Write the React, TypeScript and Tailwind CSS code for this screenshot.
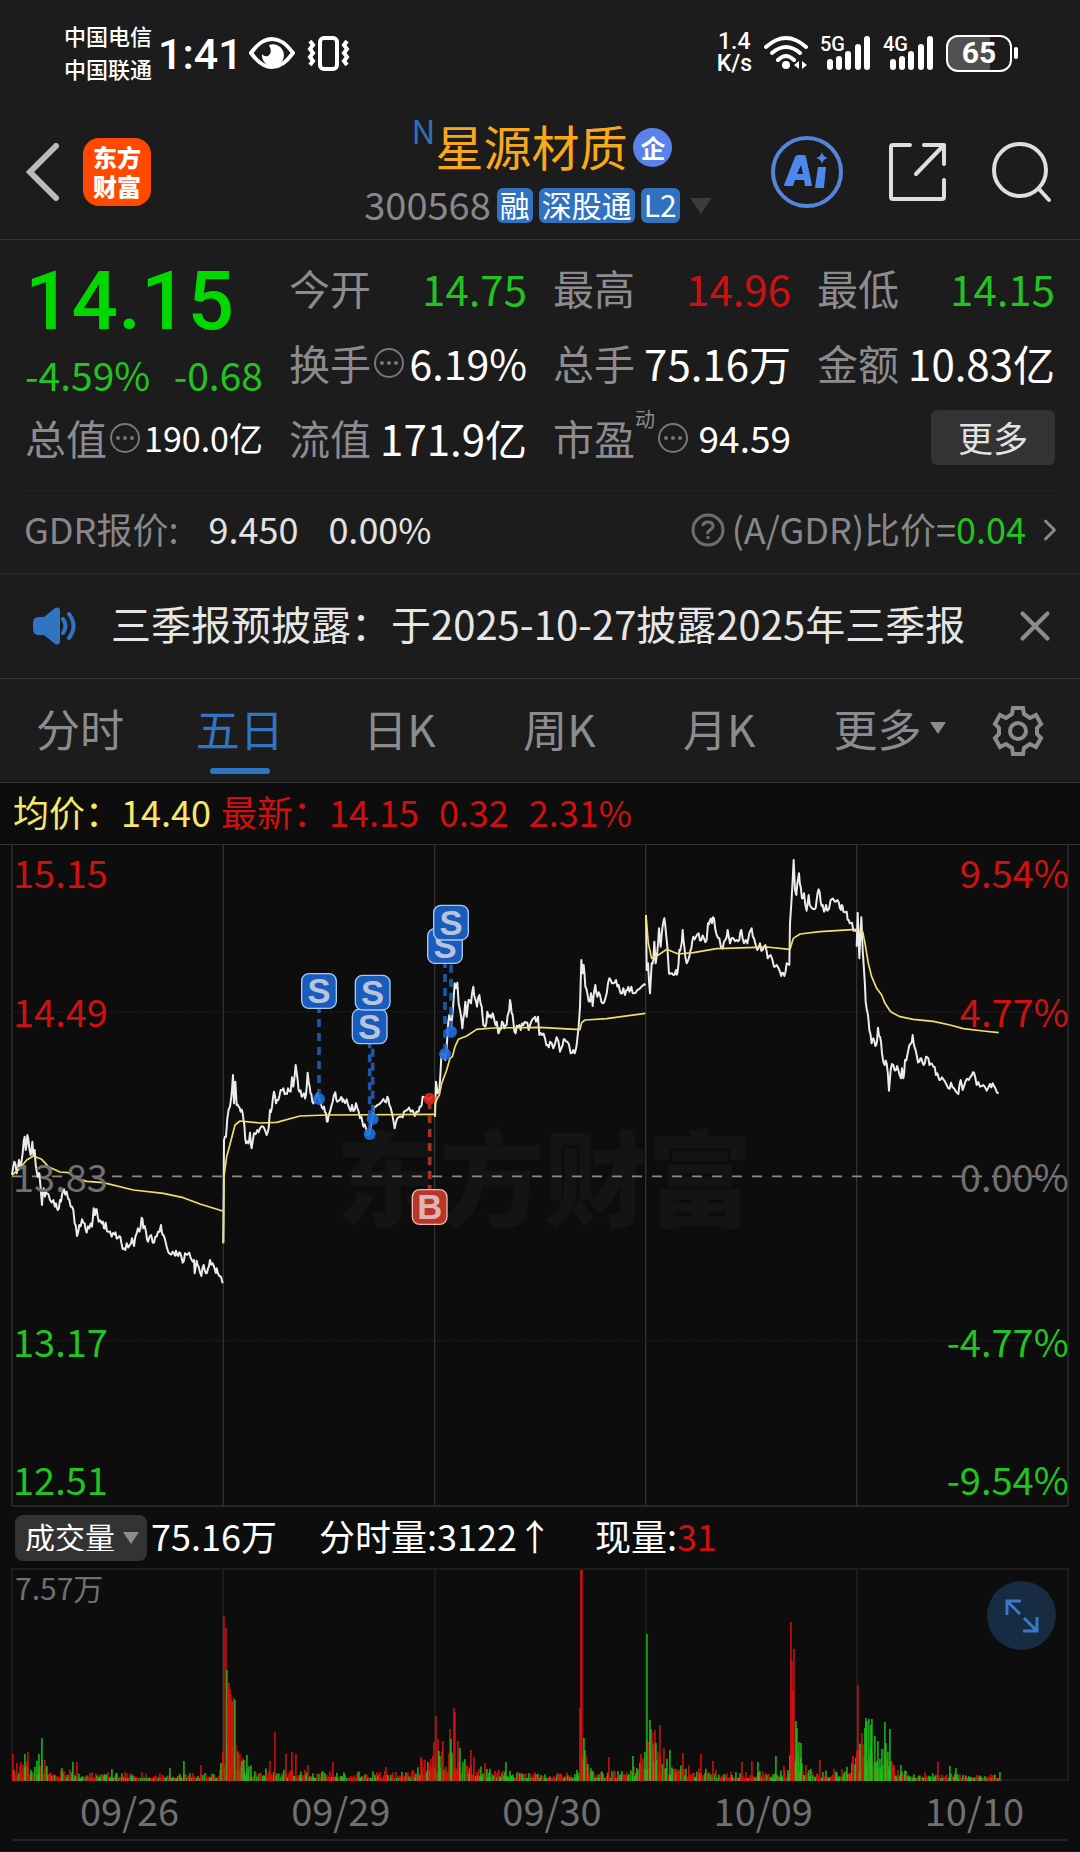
import { ChevronRight, X } from "lucide-react";

const RED = "#d01010";
const GREEN = "#22c322";

// Chart coordinates are thirds of a pixel; each trading day is 634 units wide.
const DAYS = [
  {
    price:
      "36,1005 43,965 50,1000 57,960 63,975 68,940 74,890 77,930 82,885 88,925 92,945 97,905 100,945 104,930 107,975 113,1010 118,1000 122,1045 126,1095 131,1045 135,1070 140,1060 150,1080 160,1080 165,1100 168,1090 173,1110 180,1080 186,1065 192,1048 200,1055 208,1080 212,1100 220,1110 224,1150 231,1188 238,1155 246,1138 254,1150 260,1178 268,1165 276,1160 281,1105 285,1125 290,1108 296,1145 305,1150 312,1165 317,1148 325,1175 335,1190 343,1183 350,1196 358,1188 364,1208 372,1225 380,1210 390,1214 396,1195 402,1218 410,1180 414,1165 418,1175 425,1133 430,1165 438,1175 444,1205 449,1190 453,1185 458,1208 466,1190 474,1175 483,1155 488,1185 494,1195 500,1220 510,1242 518,1235 522,1240 528,1232 535,1248 540,1238 548,1268 555,1240 568,1238 574,1258 582,1260 584,1300 590,1262 596,1280 604,1308 611,1275 618,1300 624,1285 630,1260 638,1270 645,1290 650,1285 658,1308 668,1330",
    average:
      "36,1005 60,985 80,960 100,948 125,958 145,980 180,996 205,998 230,1015 260,1024 310,1028 400,1050 490,1060 550,1073 600,1092 668,1113",
  },
  {
    price:
      "670,1210 672,900 678,890 682,835 690,800 694,770 699,705 702,790 706,725 710,795 716,800 722,815 728,820 733,855 738,910 745,910 750,878 755,925 762,880 772,870 780,865 790,860 800,885 806,865 810,810 816,800 822,755 828,790 835,780 842,750 850,745 858,760 864,745 872,755 876,712 880,740 887,675 893,720 898,755 905,770 912,760 918,765 923,698 929,740 934,762 940,790 948,770 957,775 965,800 972,800 978,820 983,845 990,815 998,785 1006,757 1012,785 1020,780 1025,772 1030,778 1040,778 1048,805 1056,795 1064,810 1068,790 1076,815 1084,830 1090,860 1098,865 1108,882 1115,840 1122,800 1132,795 1145,785 1155,785 1162,770 1168,795 1176,820 1184,865 1192,835 1204,830 1212,815 1222,810 1232,815 1244,828 1256,815 1262,800 1268,770 1280,775 1296,768",
    average:
      "670,1210 672,1010 680,950 692,905 705,855 720,843 780,849 830,847 900,828 980,825 1302,823",
  },
  {
    price:
      "1305,830 1308,725 1313,760 1318,750 1324,650 1330,645 1336,660 1342,590 1348,525 1354,560 1360,490 1364,430 1368,445 1372,428 1376,490 1380,510 1387,565 1393,520 1396,485 1400,530 1406,480 1413,490 1420,440 1425,475 1431,500 1438,465 1445,500 1450,555 1456,560 1462,515 1470,525 1478,520 1484,545 1490,545 1495,580 1500,565 1506,545 1513,565 1520,555 1525,520 1530,480 1535,520 1540,545 1547,580 1554,560 1562,570 1570,555 1578,548 1586,570 1594,545 1602,535 1608,545 1614,530 1618,585 1626,585 1635,595 1643,615 1650,605 1660,625 1670,592 1680,635 1688,615 1694,598 1702,605 1712,640 1720,630 1724,640 1730,615 1736,560 1740,500 1744,360 1748,400 1751,375 1756,440 1762,460 1770,485 1773,460 1778,498 1786,435 1792,470 1800,465 1808,490 1816,475 1824,430 1832,420 1840,430 1848,420 1856,435 1862,460 1870,445 1875,465 1882,450 1888,455 1894,440 1902,460 1912,450 1920,445 1930,435 1936,436",
    average:
      "1305,830 1306,790 1312,775 1318,765 1325,730 1340,690 1350,655 1357,650 1365,620 1375,598 1400,588 1430,568 1480,564 1620,562 1740,569 1745,548 1755,540 1820,536 1936,520",
  },
  {
    price:
      "1938,225 1940,390 1944,370 1950,460 1955,370 1960,360 1963,305 1967,370 1972,335 1977,265 1982,320 1987,265 1993,235 1998,280 2002,320 2007,400 2013,400 2020,405 2028,390 2033,395 2038,330 2043,320 2048,270 2053,320 2060,370 2068,350 2074,325 2080,290 2088,290 2096,280 2104,300 2112,295 2120,300 2124,250 2130,240 2136,250 2142,235 2150,285 2158,295 2168,325 2176,300 2183,270 2190,310 2200,295 2210,300 2218,300 2224,270 2232,310 2242,310 2255,265 2262,295 2272,330 2280,310 2288,330 2296,315 2303,355 2312,345 2322,380 2330,375 2340,395 2347,398 2353,408 2360,370 2368,375 2370,250 2374,190 2381,60 2385,150 2389,165 2392,130 2397,100 2402,140 2406,175 2412,160 2420,212 2426,165 2432,200 2444,208 2450,180 2456,148 2462,185 2468,195 2472,215 2478,195 2482,212 2492,180 2505,185 2512,180 2520,205 2525,195 2530,215 2540,215 2546,240 2552,250 2560,272 2568,275",
    average:
      "1938,225 1945,310 1955,355 1975,345 2000,328 2035,342 2080,338 2150,326 2300,321 2370,328 2380,295 2400,282 2460,275 2568,268",
  },
  {
    price:
      "2570,320 2573,218 2578,355 2584,232 2588,330 2592,390 2597,485 2603,520 2608,570 2615,610 2620,595 2626,618 2631,605 2634,563 2640,590 2646,640 2654,675 2660,670 2667,752 2672,690 2680,675 2688,690 2695,690 2703,715 2706,685 2710,715 2715,660 2723,640 2733,610 2738,585 2743,620 2750,645 2758,665 2764,655 2771,675 2778,650 2785,655 2792,670 2800,680 2808,705 2812,700 2818,720 2826,712 2835,725 2845,745 2853,728 2862,745 2875,762 2882,720 2888,750 2896,725 2906,720 2916,705 2922,698 2930,735 2940,740 2950,735 2960,752 2970,732 2978,730 2986,745 2996,760",
    average:
      "2570,270 2588,275 2595,310 2605,370 2615,410 2630,445 2645,465 2655,490 2672,515 2700,530 2740,538 2800,544 2850,555 2890,566 2950,573 2996,578",
  },
];

const TRADES = [
  { side: "S", x: 957, y: 777, tagY: 453 },
  { side: "S", x: 1109, y: 882, tagY: 559 },
  { side: "S", x: 1118, y: 837, tagY: 458 },
  { side: "S", x: 1335, y: 642, tagY: 318 },
  { side: "S", x: 1353, y: 575, tagY: 248 },
  { side: "B", x: 1289, y: 776, tagY: 1101 },
];

const AXIS = [
  { price: "15.15", percent: "9.54%", y: 144, color: RED },
  { price: "14.49", percent: "4.77%", y: 561, color: RED },
  { price: "13.83", percent: "0.00%", y: 1055, color: "#707070" },
  { price: "13.17", percent: "-4.77%", y: 1551, color: GREEN },
  { price: "12.51", percent: "-9.54%", y: 1965, color: GREEN },
];

// [x, usual bar height]
const VOLUME_LEVELS = [
  [0, 18], [25, 22], [35, 22], [42, 14], [70, 11], [95, 9], [200, 8], [208, 15], [214, 60], [222, 40],
  [232, 20], [245, 12], [262, 14], [285, 14], [300, 10], [395, 10], [410, 20], [425, 30], [440, 30],
  [455, 22], [475, 14], [500, 10], [560, 9], [566, 20], [570, 30], [580, 13], [610, 11], [628, 22],
  [636, 50], [645, 32], [660, 22], [675, 16], [700, 15], [710, 10], [760, 10], [775, 14], [781, 60],
  [788, 30], [795, 13], [810, 10], [835, 15], [845, 36], [853, 48], [866, 34], [876, 34], [882, 15],
  [900, 9], [988, 7],
];

// [x, height, rising]
const VOLUME_PEAKS = [
  [0, 27, 1], [12, 27, 0], [15, 29, 1], [26, 27, 0], [29, 43, 0], [32, 21, 1], [60, 19, 0], [64, 19, 1],
  [99, 12, 0], [157, 13, 0], [171, 20, 0], [188, 16, 1], [208, 18, 0], [211, 165, 1], [213, 153, 1],
  [214, 111, 0], [215, 98, 1], [216, 98, 1], [217, 92, 1], [218, 87, 1], [219, 80, 1], [220, 80, 1],
  [221, 83, 1], [222, 81, 0], [223, 36, 1], [225, 30, 1], [227, 27, 1], [229, 20, 0], [231, 21, 0],
  [234, 26, 0], [257, 20, 1], [262, 49, 1], [273, 27, 1], [279, 29, 1], [283, 27, 1], [295, 16, 1],
  [320, 19, 1], [373, 14, 1], [408, 24, 1], [409, 22, 1], [416, 18, 1], [420, 25, 1], [421, 39, 1],
  [423, 65, 1], [425, 42, 1], [426, 30, 0], [430, 40, 1], [437, 52, 1], [438, 42, 0], [441, 73, 1],
  [442, 69, 1], [445, 40, 1], [447, 33, 0], [458, 31, 1], [461, 24, 1], [472, 18, 1], [493, 19, 0],
  [567, 73, 1], [568, 211, 1], [569, 211, 1], [571, 43, 0], [572, 31, 0], [573, 25, 1], [596, 24, 1],
  [620, 25, 0], [628, 27, 1], [634, 147, 0], [637, 61, 0], [638, 52, 0], [639, 49, 1], [642, 51, 1],
  [643, 38, 0], [647, 56, 1], [651, 33, 1], [657, 31, 0], [670, 28, 1], [688, 27, 1], [700, 20, 1],
  [729, 19, 1], [739, 20, 1], [745, 19, 0], [763, 25, 0], [771, 15, 1], [778, 159, 1], [779, 120, 1],
  [780, 91, 1], [781, 132, 1], [783, 60, 0], [784, 53, 0], [786, 39, 0], [788, 38, 0], [793, 16, 1],
  [807, 21, 1], [840, 25, 1], [845, 96, 1], [847, 37, 0], [849, 48, 1], [852, 53, 0], [853, 63, 0],
  [854, 60, 0], [856, 62, 0], [858, 56, 0], [859, 62, 0], [862, 45, 0], [865, 40, 0], [869, 32, 0],
  [872, 59, 0], [873, 38, 0], [877, 52, 0], [881, 16, 1], [888, 16, 0], [925, 19, 1], [937, 15, 0],
  [943, 13, 0], [987, 9, 0],
];

function noise(n: number) {
  const v = Math.sin(n * 127.1 + 11.7) * 43758.5453;
  return v - Math.floor(v);
}

function withTicks(points: string) {
  const list = points.split(" ").map((p) => p.split(",").map(Number));
  return list
    .flatMap(([x, y], i) => {
      const next = list[i + 1];
      if (!next || next[0] - x < 5) return [`${x},${y}`];
      const tick = (noise(x) - 0.5) * 26;
      return [`${x},${y}`, `${(x + next[0]) / 2},${(y + next[1]) / 2 + tick}`];
    })
    .join(" ");
}

function levelAt(x: number) {
  const i = Math.max(1, VOLUME_LEVELS.findIndex(([px]) => px >= x));
  const [x0, h0] = VOLUME_LEVELS[i - 1];
  const [x1, h1] = VOLUME_LEVELS[i];
  return h0 + ((h1 - h0) * (x - x0)) / (x1 - x0);
}

const VOLUME_BARS = Array.from({ length: 987 }, (_, x) => {
  const swing = noise(x);
  return [x, Math.max(3, levelAt(x) * (0.25 + 0.75 * swing * swing)), noise(x + 2000) > 0.5 ? 1 : 0];
});

function Triangle({ className }: { className: string }) {
  return (
    <svg viewBox="0 0 16 12" className={className} fill="currentColor" aria-hidden="true">
      <path d="M0 0H16L8 12Z" />
    </svg>
  );
}

function Dots() {
  return (
    <svg viewBox="0 0 32 32" className="ml-0.5 size-8 shrink-0 text-[#77777a]" fill="currentColor" aria-hidden="true">
      <circle cx="16" cy="16" r="14" fill="none" stroke="currentColor" strokeWidth="2" />
      <circle cx="9" cy="16" r="2" />
      <circle cx="16" cy="16" r="2" />
      <circle cx="23" cy="16" r="2" />
    </svg>
  );
}

function Signal({ label }: { label: string }) {
  return (
    <div className="relative">
      <span className="absolute -top-px left-0 font-[Roboto] text-[20px] font-medium leading-5">{label}</span>
      <svg viewBox="0 0 51 36" className="h-9 w-[51px]" fill="#fff" aria-hidden="true">
        <rect x="7" y="24" width="6" height="11" rx="3" />
        <rect x="16" y="21" width="6" height="14" rx="3" />
        <rect x="25" y="16" width="6" height="19" rx="3" />
        <rect x="35" y="9" width="6" height="26" rx="3" />
        <rect x="44" y="1" width="6" height="34" rx="3" />
      </svg>
    </div>
  );
}

function StatusBar() {
  return (
    <div className="flex h-[104px] items-center justify-between pl-16 pr-[62px] pt-0.5 text-white">
      <div className="flex items-center">
        <div className="pb-0.5 text-[22px] font-medium leading-[33px]">
          <div>中国电信</div>
          <div>中国联通</div>
        </div>
        <span className="ml-[6px] pt-0.5 font-[Roboto] text-[43px] font-medium leading-none">1:41</span>
        <svg viewBox="0 0 46 32" className="ml-[6px] h-8 w-[46px]" fill="none" aria-hidden="true">
          <path d="M2 16C10 5 16 2 23 2S36 5 44 16C36 27 30 30 23 30S10 27 2 16Z" stroke="#fff" strokeWidth="4" />
          <path d="M20 8A11 11 0 1 1 13 17Q15 20 19 19Q24 16 20 8Z" fill="#fff" />
        </svg>
        <svg viewBox="0 0 43 36" className="ml-3 h-9 w-[43px]" fill="none" stroke="#fff" aria-hidden="true">
          <rect x="13" y="3" width="17" height="31" rx="4" strokeWidth="4" />
          <path d="M3 6L6 10L3 14L6 18L3 22L6 26L3 30M40 6L37 10L40 14L37 18L40 22L37 26L40 30" strokeWidth="4" />
        </svg>
      </div>
      <div className="flex items-center">
        <div className="text-center font-[Roboto] text-[23px] font-medium leading-[22px]">
          <div>1.4</div>
          <div>K/s</div>
        </div>
        <svg viewBox="0 0 44 36" className="ml-3 h-9 w-11" fill="none" stroke="#fff" strokeLinecap="round" aria-hidden="true">
          <path d="M2 12Q22-6 42 12M8 18Q22 6 36 18M14 25Q22 17 30 25" strokeWidth="4" />
          <circle cx="22" cy="30" r="4" fill="#fff" stroke="none" />
          <path d="M35 26V34L30 30ZM38 26V34L43 30Z" fill="#fff" stroke="none" />
        </svg>
        <div className="ml-3 flex gap-3">
          <Signal label="5G" />
          <Signal label="4G" />
        </div>
        <div className="ml-3 flex items-center gap-0.5">
          <div className="flex h-[37px] w-[66px] items-center justify-center rounded-xl border-2 border-white bg-linear-to-r from-[#505050] from-68% to-transparent to-68% font-[Roboto] text-[30px] font-bold leading-none">
            65
          </div>
          <div className="h-3 w-1 rounded-sm bg-white" />
        </div>
      </div>
    </div>
  );
}

function Header() {
  return (
    <header className="flex h-[136px] items-center border-b border-[#333] px-6">
      <div className="flex flex-1 items-center gap-6">
        <button aria-label="返回">
          <svg viewBox="0 0 35 58" className="h-[58px] w-[35px]" fill="none" stroke="#bbb" strokeWidth="6" aria-hidden="true">
            <path d="M32 3L6 29L32 55" strokeLinecap="round" />
          </svg>
        </button>
        <button className="grid size-[68px] place-items-center content-center rounded-2xl bg-[#ff4800] pb-0.5 text-2xl font-black leading-[29px] text-white">
          <span>东方</span>
          <span>财富</span>
        </button>
      </div>
      <div className="pt-2">
        <div className="flex h-[60px] items-center justify-center pl-2">
          <span className="self-start text-[33px] leading-7 text-[#2f6fbb]">N</span>
          <h1 className="pb-0.5 text-[48px] leading-none text-[#f9a71b]">星源材质</h1>
          <span className="ml-[6px] mt-1 grid size-[39px] place-items-center rounded-full bg-[#5b82e8] text-[25px] font-bold leading-none text-white">
            企
          </span>
        </div>
        <div className="flex h-[60px] items-center justify-center gap-[6px] text-[30px] leading-[33px] text-white">
          <span className="pb-1 text-[38px] leading-none text-[#88888c]">300568</span>
          <span className="h-[35px] rounded-md bg-[#3072c0] px-[3px]">融</span>
          <span className="h-[35px] rounded-md bg-[#3072c0] px-[3px]">深股通</span>
          <span className="h-[35px] rounded-md bg-[#3072c0] px-[3px]">L2</span>
          <Triangle className="ml-1 h-4 w-[22px] text-[#3c3c3c]" />
        </div>
      </div>
      <div className="flex flex-1 items-center justify-end gap-11 pr-1">
        <button aria-label="Ai">
          <svg viewBox="0 0 74 74" className="size-[74px]" aria-hidden="true">
            <circle cx="37" cy="37" r="34" fill="none" stroke="#5285dc" strokeWidth="4" />
            <path d="M14 50L25 22Q26 20 28 20H34Q36 20 36 22L42 50Q42 51 41 51H35L34 45H25L23 51H15Q14 51 14 50ZM27 39H33L31 30Z" fill="#4c87ee" />
            <path d="M48 32H56L54 52Q54 53 53 53H46Q45 53 45 52ZM52 17Q53 22 58 23Q53 24 52 29Q51 24 46 23Q51 22 52 17Z" fill="#4c87ee" />
          </svg>
        </button>
        <button aria-label="分享">
          <svg viewBox="0 0 60 60" className="size-[60px]" fill="none" stroke="#dedede" strokeWidth="4" strokeLinecap="round" strokeLinejoin="round" aria-hidden="true">
            <path d="M22 3H5Q3 3 3 5V55Q3 57 5 57H54Q56 57 56 55V38M36 3H56V22M55 4L28 32" />
          </svg>
        </button>
        <button aria-label="搜索">
          <svg viewBox="0 0 60 62" className="h-[62px] w-[60px]" fill="none" stroke="#dedede" strokeWidth="4" strokeLinecap="round" aria-hidden="true">
            <circle cx="28" cy="29" r="26" />
            <path d="M47 48L57 59" />
          </svg>
        </button>
      </div>
    </header>
  );
}

function Quote({ label, value, tone = "text-white", size = "text-[42px]", note, dots }: {
  label: string; value: string; tone?: string; size?: string; note?: string; dots?: boolean;
}) {
  return (
    <div className="flex h-[75px] items-center justify-between whitespace-nowrap leading-none">
      <dt className="flex items-center text-[41px] text-[#8c8c90]">
        {label}
        {note && <span className="-mt-1 self-start text-xl leading-3">{note}</span>}
        {dots && <Dots />}
      </dt>
      <dd className={`${size} ${tone}`}>{value}</dd>
    </div>
  );
}

function Quotes() {
  return (
    <section className="grid grid-cols-4 gap-x-[26px] px-[25px] pb-[15px] pt-[10px]">
      <div className="row-span-2 text-[#22c322]">
        <p className="flex h-[98px] items-center pt-1 font-[Roboto] text-[82px] font-medium leading-none text-[#00d800]">14.15</p>
        <p className="flex h-[52px] items-center justify-between text-[39px] leading-none">
          <span>-4.59%</span>
          <span>-0.68</span>
        </p>
      </div>
      <dl className="contents">
        <Quote label="今开" value="14.75" tone="text-[#22c322]" />
        <Quote label="最高" value="14.96" tone="text-[#d01010]" />
        <Quote label="最低" value="14.15" tone="text-[#22c322]" />
        <Quote label="换手" value="6.19%" size="text-[41px]" dots />
        <Quote label="总手" value="75.16万" />
        <Quote label="金额" value="10.83亿" />
        <Quote label="总值" value="190.0亿" size="text-[34px]" dots />
        <Quote label="流值" value="171.9亿" />
        <Quote label="市盈" value="94.59" size="text-[37px]" note="动" dots />
      </dl>
      <div className="flex h-[75px] items-center justify-end">
        <button className="h-[55px] w-[124px] rounded-md bg-[#333] pb-0.5 text-[35px] leading-none text-[#e2e2e2]">更多</button>
      </div>
    </section>
  );
}

function GdrRow() {
  return (
    <div className="border-b border-[#2b2b2b] px-6">
      <div className="flex h-[83px] items-center border-t border-[#252525] pb-2 text-4xl leading-none text-[#88888c]">
        <span>GDR报价:</span>
        <span className="ml-[30px] text-[#e2e2e2]">9.450</span>
        <span className="ml-[30px] text-[#e2e2e2]">0.00%</span>
        <a href="#gdr" className="ml-auto flex items-center">
          <svg viewBox="0 0 36 36" className="mr-[6px] mt-1 size-9" fill="none" stroke="#6e6e70" strokeWidth="3" aria-hidden="true">
            <circle cx="18" cy="18" r="15" />
            <path d="M13 14Q13 10 18 10T23 14Q23 16 20 18T18 22M18 24V27" />
          </svg>
          (A/GDR)比价=<span className="text-[#22c322]">0.04</span>
          <ChevronRight className="-mr-3 ml-[6px] mt-1 h-10 w-9" strokeWidth={2} />
        </a>
      </div>
    </div>
  );
}

function Notice() {
  return (
    <div className="flex h-[105px] items-center border-b border-[#333] px-8">
      <svg viewBox="0 0 46 38" className="h-[38px] w-[46px]" fill="#3074c4" aria-hidden="true">
        <path d="M7 10H12L23 1Q28-1 28 4V34Q28 39 23 37L12 28H7Q1 28 1 22V16Q1 10 7 10Z" />
        <path d="M31 12Q36 19 31 26M37 7Q46 19 37 31" fill="none" stroke="#3074c4" strokeWidth="4" strokeLinecap="round" />
      </svg>
      <p className="ml-[33px] flex-1 whitespace-nowrap pb-[6px] text-[40px] leading-none text-[#e6e6e6]">
        三季报预披露：于2025-10-27披露2025年三季报
      </p>
      <button aria-label="关闭" className="-mr-3">
        <X className="size-[50px] text-[#8c8c90]" strokeWidth={2} />
      </button>
    </div>
  );
}

function Tabs() {
  return (
    <nav className="flex h-[104px] border-b border-[#333] text-[44px] leading-none text-[#8c8c90]">
      {["分时", "五日", "日K", "周K", "月K"].map((tab) => (
        <button key={tab} className={tab === "五日" ? "relative w-[14.8%] pb-[6px] text-[#3074c4]" : "w-[14.8%] pb-[6px]"}>
          {tab}
          {tab === "五日" && <span className="absolute bottom-2 left-1/2 h-[6px] w-[60px] -translate-x-1/2 rounded-full bg-[#3074c4]" />}
        </button>
      ))}
      <button className="flex flex-1 items-center justify-center gap-2 pb-[6px] pr-3">
        更多
        <Triangle className="h-3 w-4" />
      </button>
      <button aria-label="设置" className="mr-9 flex items-center">
        <svg viewBox="0 0 52 52" className="size-[52px]" fill="none" stroke="currentColor" strokeWidth="4" aria-hidden="true">
          <path d="M21 3H31L32 9L38 13L44 10L49 19L45 23V29L49 33L44 42L38 39L32 43L31 49H21L20 43L14 39L8 42L3 33L7 29V23L3 19L8 10L14 13L20 9Z" />
          <circle cx="26" cy="26" r="8" />
        </svg>
      </button>
    </nav>
  );
}

function PriceChart() {
  return (
    <svg viewBox="36 15 3168 1986" className="block w-full overflow-visible" fontFamily="'Noto Sans CJK SC', sans-serif">
      <text x="1632" y="1136" fontSize="312" fontWeight="900" textAnchor="middle" fill="#141414">东方财富</text>
      <g stroke="#303030" strokeWidth="4">
        {[36, 670, 1304, 1937, 2570, 3204].map((x) => (
          <path key={x} d={`M${x} 15V1998`} />
        ))}
        <path d="M36 1998H3204" strokeWidth="5" />
        <path d="M36 515H3204M36 1502H3204" strokeWidth="3" strokeDasharray="3 6" />
      </g>
      <path d="M36 1009H3186" stroke="#8a8a8a" strokeWidth="5" strokeDasharray="30 30" />
      {DAYS.map((day, i) => (
        <g key={i} fill="none" strokeLinejoin="round">
          <polyline points={withTicks(day.price)} stroke="#ececec" strokeWidth="6" />
          <polyline points={day.average} stroke="#efe06a" strokeWidth="5" />
        </g>
      ))}
      {AXIS.map((row) => (
        <g key={row.price} fill={row.color} fontSize="114">
          <text x="39" y={row.y}>{row.price}</text>
          <text x="3206" y={row.y} textAnchor="end">{row.percent}</text>
        </g>
      ))}
      {TRADES.map(({ side, x, y, tagY }) => (
        <g key={x} opacity="0.9">
          <path d={`M${x} ${tagY}V${y}`} stroke={side === "S" ? "#1f5fb8" : "#b8362c"} strokeWidth="11" strokeDasharray="24 18" />
          <circle cx={x} cy={y} r="18" fill={side === "S" ? "#1f6fe0" : "#e0281c"} />
        </g>
      ))}
      {TRADES.map(({ side, x, tagY }) => (
        <g key={x}>
          <rect x={x - 52} y={tagY - 52} width="104" height="104" rx="22" fill={side === "S" ? "#1a5cbc" : "#b8362a"} stroke={side === "S" ? "#a8c8f0" : "#f0b8b0"} strokeWidth="4" />
          <text x={x} y={tagY + 37} fontSize="104" fontWeight="700" fontFamily="'Liberation Sans', sans-serif" textAnchor="middle" fill={side === "S" ? "#b8c4dc" : "#e0b4b4"}>
            {side}
          </text>
        </g>
      ))}
    </svg>
  );
}

function VolumeChart() {
  return (
    <div className="relative">
      <svg viewBox="0 0 1056 212" className="block w-full overflow-visible">
        <g stroke="#2c2c2c">
          {[0, 211, 423, 634, 845, 1056].map((x) => (
            <path key={x} d={`M${x} 0V212`} />
          ))}
          <path d="M0 0H1056M0 211H1056" />
        </g>
        {[...VOLUME_BARS, ...VOLUME_PEAKS].map(([x, height, rising], i) => (
          <rect key={i} x={x} y={212 - height} width="1.8" height={height} fill={rising ? "#e01010" : "#1cc41c"} opacity="0.8" />
        ))}
        <text x="3" y="31" fontSize="30" fontFamily="'Noto Sans CJK SC', sans-serif" fill="#707070">7.57万</text>
      </svg>
      <button aria-label="全屏" className="absolute right-3 top-3 grid size-[69px] place-items-center rounded-full bg-[#172b42]">
        <svg viewBox="0 0 34 34" className="size-[34px]" fill="none" stroke="#3878c4" strokeWidth="3" aria-hidden="true">
          <path d="M2 16V2H16M2 2L15 15M32 18V32H18M32 32L19 19" />
        </svg>
      </button>
    </div>
  );
}

export default function App() {
  return (
    <div className="min-h-screen bg-[#1c1c1c] font-['Noto_Sans_CJK_SC',sans-serif]">
      <StatusBar />
      <Header />
      <Quotes />
      <GdrRow />
      <Notice />
      <Tabs />
      <main className="bg-[#0d0d0d] px-3 pb-[10px]">
        <div className="-mx-3 flex h-[62px] items-center border-b border-[#333] px-[13px] pb-[6px] text-4xl leading-none text-[#d01010]">
          <span className="text-[#f8e868]">均价：14.40</span>
          <span className="ml-[10px]">最新：14.15</span>
          <span className="ml-5">0.32</span>
          <span className="ml-5">2.31%</span>
        </div>
        <PriceChart />
        <div className="flex h-[62px] items-center pl-[3px] text-4xl leading-none text-white">
          <div className="relative flex items-center">
            <select aria-label="指标" className="h-[46px] w-[132px] appearance-none rounded-lg bg-[#333] pb-1 pl-[10px] text-[30px] leading-none">
              <option>成交量</option>
            </select>
            <Triangle className="pointer-events-none absolute right-2 h-3 w-4 text-[#8c8c90]" />
          </div>
          <div className="ml-1 flex gap-[42px] pb-[6px]">
            <span>75.16万</span>
            <span>分时量:3122↑</span>
            <span>现量:<span className="text-[#d01010]">31</span></span>
          </div>
        </div>
        <VolumeChart />
        <div className="grid h-[60px] grid-cols-5 items-center border-b-2 border-[#222] text-center text-[38px] leading-none text-[#707070]">
          {["09/26", "09/29", "09/30", "10/09", "10/10"].map((date) => (
            <span key={date} className="pl-6">{date}</span>
          ))}
        </div>
      </main>
    </div>
  );
}
